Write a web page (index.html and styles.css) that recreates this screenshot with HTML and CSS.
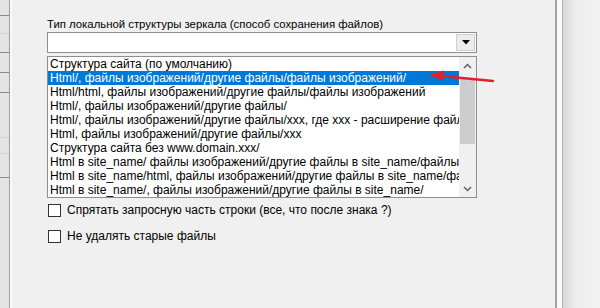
FILE: index.html
```html
<!DOCTYPE html>
<html lang="ru">
<head>
  <meta charset="UTF-8">
  <title>Структура зеркала</title>
  <link rel="stylesheet" href="styles.css">
</head>
<body>
  <div class="window">
    <div class="side-strip">
      <div class="strip-row" style="height: 16px"></div>
      <div class="strip-row light" style="height: 18px"></div>
      <div class="strip-row" style="height: 19px"></div>
      <div class="strip-row" style="height: 20px"></div>
      <div class="strip-row" style="height: 20px"></div>
      <div class="strip-row light" style="height: 45px"></div>
      <div class="strip-row light" style="height: 16px"></div>
      <div class="strip-row" style="height: 24px"></div>
    </div>
    <div class="panel">
      <div class="field">
        <div class="field-label">Тип локальной структуры зеркала (способ сохранения файлов)</div>
        <div class="combo">
          <div class="combo-value"></div>
          <div class="combo-button">
            <svg width="8" height="5" viewBox="0 0 8 5"><polygon points="0 0 8 0 4 4.5" fill="#000"/></svg>
          </div>
        </div>
        <div class="listbox">
          <ul class="list-items">
            <li>Структура сайта (по умолчанию)</li>
            <li class="selected">Html/, файлы изображений/другие файлы/файлы изображений/</li>
            <li>Html/html, файлы изображений/другие файлы/файлы изображений</li>
            <li>Html/, файлы изображений/другие файлы/</li>
            <li>Html/, файлы изображений/другие файлы/xxx, где xxx - расширение файла</li>
            <li>Html, файлы изображений/другие файлы/xxx</li>
            <li>Структура сайта без www.domain.xxx/</li>
            <li>Html в site_name/ файлы изображений/другие файлы в site_name/файлы изображений</li>
            <li>Html в site_name/html, файлы изображений/другие файлы в site_name/файлы изображений</li>
            <li>Html в site_name/, файлы изображений/другие файлы в site_name/</li>
          </ul>
          <div class="scrollbar">
            <div class="scroll-arrow">
              <svg width="9" height="6" viewBox="0 0 9 6"><polyline points="1 5 4.5 1.5 8 5" fill="none" stroke="#606060" stroke-width="1.5"/></svg>
            </div>
            <div class="scroll-track">
              <div class="scroll-thumb"></div>
            </div>
            <div class="scroll-arrow">
              <svg width="9" height="6" viewBox="0 0 9 6"><polyline points="1 1 4.5 4.5 8 1" fill="none" stroke="#606060" stroke-width="1.5"/></svg>
            </div>
          </div>
        </div>
        <!-- red pointer drawn over the list -->
        <svg class="pointer-arrow" width="70" height="20" viewBox="0 0 70 20">
          <line x1="66" y1="12" x2="14" y2="7" stroke="#e5202a" stroke-width="2.5" stroke-linecap="round"/>
          <polygon points="2 6 17 1.5 16 11.5" fill="#e5202a"/>
        </svg>
      </div>
      <label class="check-row">
        <span class="check-box"></span>
        <span>Спрятать запросную часть строки (все, что после знака ?)</span>
      </label>
      <label class="check-row">
        <span class="check-box"></span>
        <span>Не удалять старые файлы</span>
      </label>
    </div>
    <div class="frame-edge"></div>
    <div class="outer-area"></div>
  </div>
</body>
</html>
```

FILE: styles.css
```css
body, html {
  margin: 0;
  padding: 0;
  height: 100%;
  font-family: "Liberation Sans", Arial, sans-serif;
  font-size: 12px;
  color: #000;
}
.window {
  display: flex;
  height: 308px;
  overflow: hidden;
  background-color: #f0f0f0;
}
.side-strip {
  width: 9px;
  background-color: #e4e4e4;
  border-right: 1px solid #9c9c9c;
  box-shadow: 2px 0 0 #f9f9f9;
  flex-shrink: 0;
}
.strip-row {
  box-sizing: border-box;
  border-bottom: 1px solid #8a8a8a;
}
.strip-row.light {
  border-bottom-color: #d2d2d2;
}
.panel {
  flex: 1;
  padding: 17px 0 0 37px;
}
.field {
  position: relative;
  width: 430px;
}
.field-label {
  font-size: 11.35px;
  line-height: 15px;
}
.combo {
  display: flex;
  height: 21px;
  box-sizing: border-box;
  border: 1px solid #8e8e8e;
  background-color: #fff;
}
.combo-value {
  flex: 1;
}
.combo-button {
  width: 17px;
  margin: 1px;
  background-color: #ececec;
  border: 1px solid #d0d0d0;
  display: flex;
  align-items: center;
  justify-content: center;
}
.listbox {
  display: flex;
  margin-top: 3px;
  height: 142px;
  box-sizing: border-box;
  border: 1px solid #8e8e8e;
  background-color: #fff;
}
.list-items {
  flex: 1;
  list-style: none;
  margin: 0;
  padding: 0;
  overflow: hidden;
}
.list-items li {
  height: 14px;
  line-height: 14px;
  padding-left: 2px;
  white-space: nowrap;
  overflow: hidden;
}
.list-items li.selected {
  background-color: #0078d7;
  color: #fff;
}
.scrollbar {
  width: 17px;
  display: flex;
  flex-direction: column;
  background-color: #f0f0f0;
}
.scroll-arrow {
  height: 17px;
  display: flex;
  align-items: center;
  justify-content: center;
}
.scroll-track {
  flex: 1;
  padding-top: 4px;
}
.scroll-thumb {
  height: 66px;
  margin: 0 1px;
  background-color: #cdcdcd;
}
.pointer-arrow {
  position: absolute;
  left: 380px;
  top: 52px;
}
.check-row {
  display: flex;
  align-items: center;
  gap: 6px;
  margin-top: 6px;
  margin-left: 1px;
  height: 13px;
  line-height: 13px;
}
.check-row + .check-row {
  margin-top: 13px;
}
.check-box {
  width: 11px;
  height: 11px;
  border: 1px solid #333;
  background-color: #fff;
}
.frame-edge {
  width: 5px;
  border-left: 2px solid #a4a4a4;
  border-right: 1px solid #b4b4b4;
  background-color: #fafafa;
  flex-shrink: 0;
}
.outer-area {
  width: 37px;
  flex-shrink: 0;
  background: linear-gradient(to right, #d9d9d9, #ececec 12px, #f2f2f2);
}
```
